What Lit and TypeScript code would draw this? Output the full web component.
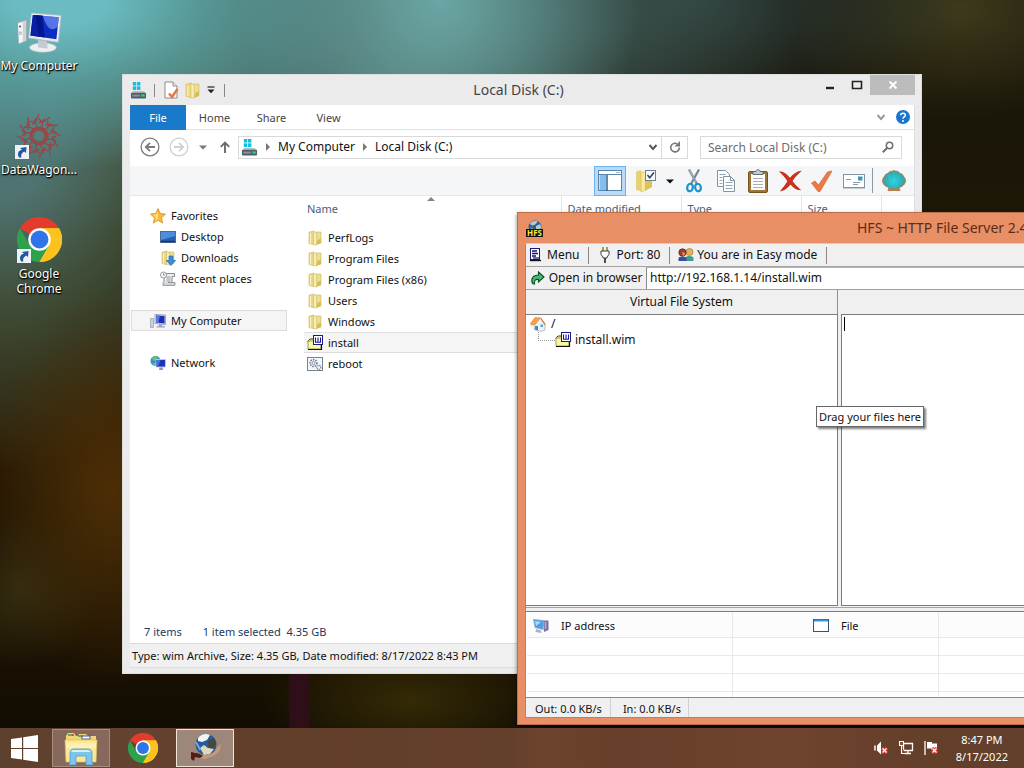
import { LitElement, html, css, svg, nothing } from "lit";
import { customElement } from "lit/decorators.js";
import { classMap } from "lit/directives/class-map.js";

/* ---------- icons ---------- */

const icon = (size: number, box: number, body: unknown) =>
  html`<svg width=${size} height=${size} viewBox="0 0 ${box} ${box}" aria-hidden="true">${body}</svg>`;

const folder = (size = 16) => icon(size, 16, svg`
  <path d="M2 2.2 7 1v13.6L2 13.6z" fill="#e9d784" stroke="#cdb458" stroke-width=".6"/>
  <path d="M8.5 2H14v11l-5.5 1z" fill="#ecdf95" stroke="#cbb55a" stroke-width=".6"/>
  <path d="M6.5 1.2 9.6 3v12L6.5 14.6z" fill="#f8efb6" stroke="#d0bb62" stroke-width=".6"/>
  <path d="M3.6 3v10.6" stroke="#fbf4c6" stroke-width="1"/><path d="M10.5 10 14 8.6V13l-4.4 2z" fill="#d6bd55"/>`);

const drive = (size = 18) => icon(size, 18, svg`
  <g fill="#12bfe4"><rect x="3" y="0" width="3.6" height="3.8"/><rect x="7.4" y="0" width="3.6" height="3.8"/>
  <rect x="3" y="4.6" width="3.6" height="3.8"/><rect x="7.4" y="4.6" width="3.6" height="3.8"/></g>
  <path d="M3.5 9.5h11l2.5 3H1z" fill="#b9c2c4"/><rect x="1" y="11.500" width="16" height="6" rx="1" fill="#4d6268"/>
  <rect x="2.4" y="13.400" width="8" height="2" fill="#8c8fa0"/><rect x="12" y="13.2" width="3.6" height="2.200" fill="#35d46a"/>`);

const props = () => icon(18, 18, svg`
  <path d="M3 1h8l4 4v12H3z" fill="#fff" stroke="#8b8b8b"/><path d="M11 1v4h4" fill="#eee" stroke="#8b8b8b"/>
  <path d="m7 12.5 3 3.5L15.500 8" fill="none" stroke="#e0764a" stroke-width="2.4"/>`);

const monitor = (size: number) => icon(size, 16, svg`
  <path d="M.5 5.500h3v9h-3z" fill="#cdd2da" stroke="#8790a0" stroke-width=".6"/>
  <path d="M5 1.500 15.500 2v9.500L5 10.500z" fill="#dfe3ec" stroke="#8289a0" stroke-width=".7"/>
  <path d="M6 2.600 14.600 3v7.400L6 9.600z" fill="#1c2fb4"/><path d="M6 2.600h4L8.500 9.700 6 9.600z" fill="#5b74e6"/>
  <path d="M9 11.200h3l.4 2H15v1.300H6.500v-1.300h2z" fill="#9aa5c0"/>`);

const computerLarge = () => icon(48, 48, svg`<g transform="translate(2 5) scale(.96)">
  <path d="m1 10 9-3v22l-8 3.500z" fill="#cfd3d7" stroke="#9aa1a8" stroke-width=".6"/>
  <path d="m1 11 5-1.500v20l-4 2z" fill="#f4f5f6"/><circle cx="3.200" cy="14" r="1" fill="#445"/>
  <path d="M2 20h3M2 22h3" stroke="#889" stroke-width=".8"/>
  <ellipse cx="27" cy="36" rx="14" ry="5" fill="#eceef0" stroke="#aab2ba" stroke-width=".6"/>
  <path d="m22 28 9 1 1 8-10-1z" fill="#c5cbd2"/>
  <path d="m15 0 31 2.500-3 28L12 26z" fill="#e8ebf0" stroke="#b3bac6" stroke-width=".7"/>
  <path d="m16.500 2 27 2.300-2.500 23L14 23.500z" fill="#0c2bc4"/>
  <path d="m16.500 2 11 .9L24 25l-10-1.500z" fill="#0a1fa8"/><path d="m19 2.200 7 .6L29 25.500l-6-.8z" fill="#021480" opacity=".8"/>
  <path d="M27 3 43.500 4.300l-1 10C36 20 31 16 27 3z" fill="#6d8df2" opacity=".75"/></g>`);

const petals = Array.from({ length: 12 }, (_, i) => i * 30);
const wagon = () => icon(48, 48, svg`<g fill="none" stroke="#a33f40" stroke-width="1.300" opacity=".9">
  ${petals.map((a) => svg`<g transform="rotate(${a} 24 24)"><path d="M24 17 20 11l4-9M24 11l6-4M20 11l-5-2"/><path d="M21 17.500 25 15l4 3"/></g>`)}
  <circle cx="24" cy="24" r="6"/></g>`);

const chrome = (size: number) => icon(size, 48, svg`
  <path d="M24 24 3.200 12A24 24 0 0 1 44.800 12z" fill="#e33b2e"/>
  <path d="M24 24V12h20.800A24 24 0 0 1 24 48z" fill="#fcc31e"/>
  <path d="M3.200 12A24 24 0 0 0 24 48l10.400-18L24 24 13.600 30z" fill="#2da14c"/>
  <path d="M24 12h20.800A24 24 0 0 1 24 48l10.400-18z" fill="#fcc31e"/>
  <circle cx="24" cy="24" r="12" fill="#fff"/><circle cx="24" cy="24" r="9.500" fill="#2f74e8"/>`);

const shortcut = () => icon(14, 14, svg`<rect width="14" height="14" fill="#eef2f6"/>
  <path d="M4 12.500C2 9 3 5.500 7 4.800L5 3l6.500-1-.5 6-1.800-1.500C6.500 8 5.500 10 6.500 12.500z" fill="#1f5a9c"/>`);

const star = () => icon(16, 16, svg`<path d="m8 .6 2.200 4.900 5.300.6-4 3.600 1.200 5.400L8 12.300l-4.700 2.800 1.200-5.400-4-3.600 5.300-.6z" fill="#f9b93c" stroke="#d98a1c" stroke-width=".8"/>
  <path d="M8 3v8l-3 2 1-4-3-2.300 3.500-.5z" fill="#fde08a"/>`);

const desktopIcon = () => icon(16, 16, svg`<rect x=".5" y="2.500" width="15" height="11" fill="#2560b4" stroke="#4f6a90"/>
  <path d="M1 3h14v4L1 11z" fill="#4b8fdc"/><path d="M1 12.500h14" stroke="#1c3354" stroke-width="1.400"/>`);

const downloads = () => html`<span class="stack">${folder()}<span class="over">${icon(16, 16, svg`<path d="M9 6h4v4.500h2.600L11 15.600 6.400 10.500H9z" fill="#3a8edb" stroke="#1d64ad" stroke-width=".6"/>`)}</span></span>`;

const recent = () => icon(16, 16, svg`
  <path d="M5 2.500h9.500v3H12v8H4V7" fill="#eceef0" stroke="#868c92"/><path d="M6.500 6h4M6.500 8h4M6.500 10h4" stroke="#8c9298" stroke-width=".9"/>
  <path d="M8 11.500h7v2.800H3v-2.800" fill="#d5d9dc" stroke="#868c92" stroke-width=".9"/>
  <circle cx="3.500" cy="4" r="3" fill="#f8f9fa" stroke="#888f96" stroke-width=".9"/><path d="M3.500 2.300V4H5" fill="none" stroke="#666" stroke-width=".7"/>`);

const network = () => icon(16, 16, svg`<circle cx="5.500" cy="6" r="5" fill="#2f8fc8"/>
  <path d="M2 3c2-2 4-2 6-1L6 5 3 6zM2 8l4 0 1 2.500-3 .3z" fill="#65c46a"/>
  <path d="M6 4.500h9.500V12H6z" fill="#1b36b8" stroke="#c6cee2" stroke-width=".9"/><path d="M6.600 5h4L8 11.400H6.600z" fill="#4a70e2"/>
  <path d="M9.500 12.500h3l.5 2.500h-4z" fill="#8796bc"/>`);

const wimFile = () => icon(16, 16, svg`<path d="M1 6 3 4h4v3H1z" fill="#fbf7a0" stroke="#26261c" stroke-width=".9"/>
  <path d="M1 6h13v8H1z" fill="#faf6a2" stroke="#8f8b42" stroke-width=".8"/><path d="M1 14.500h13.500V8" fill="none" stroke="#111" stroke-width="1.200"/>
  <rect x="6.500" y=".5" width="9" height="9" fill="#fff" stroke="#1a1a84"/><path d="M8.500 2.500v4.700h5V2.500M11 2.500v4.500" fill="none" stroke="#1a1a9c" stroke-width="1.100"/>`);

const batFile = () => icon(16, 16, svg`<rect x=".5" y="1.500" width="15" height="13" fill="#f3f7fb" stroke="#76828e"/>
  <circle cx="6.500" cy="7" r="3.400" fill="none" stroke="#6f7f90" stroke-width="1.600" stroke-dasharray="1.500 1"/><circle cx="6.500" cy="7" r="1.500" fill="none" stroke="#6f7f90" stroke-width=".8"/>
  <circle cx="11.800" cy="11.300" r="2" fill="none" stroke="#6f7f90" stroke-width="1.300" stroke-dasharray="1.100 .7"/>`);

const circleArrow = (flip: boolean, color: string) => icon(20, 20, svg`<circle cx="10" cy="10" r="8.900" fill="none" stroke=${color} stroke-width="1.300"/>
  <g transform=${flip ? "matrix(-1 0 0 1 20 0)" : "matrix(1 0 0 1 0 0)"}><path d="M15 10H6M10 5.800 5.800 10l4.200 4.200" fill="none" stroke=${color} stroke-width="1.800"/></g>`);

const caret = (color: string) => icon(8, 8, svg`<path d="M0 2.500h8L4 6.500z" fill=${color}/>`);
const crumb = () => icon(8, 8, svg`<path d="M2 0v8l4-4z" fill="#777"/>`);
const chevron = (color: string) => icon(10, 10, svg`<path d="m1.500 3 3.500 4 3.500-4" fill="none" stroke=${color} stroke-width="1.900"/>`);
const upArrow = () => icon(12, 12, svg`<path d="M6 12V1.500M1.800 5.800 6 1.500l4.200 4.300" fill="none" stroke="#6a6a6a" stroke-width="1.900"/>`);
const refresh = () => icon(12, 12, svg`<path d="M8 2.800A4.300 4.300 0 1 0 10.300 6.500" fill="none" stroke="#777" stroke-width="1.600"/><path d="M5.500 5.500H11V0z" fill="#777"/>`);
const lens = () => icon(12, 12, svg`<circle cx="7.500" cy="4.500" r="3.200" fill="none" stroke="#6f6f6f" stroke-width="1.500"/><path d="M5 7 .8 11.200" stroke="#6f6f6f" stroke-width="2"/>`);
const help = () => icon(14, 14, svg`<circle cx="7" cy="7" r="7" fill="#1a75cf"/><path d="M4.700 5.300C4.800 2.400 9.400 2.500 9.300 5.200 9.200 6.900 7 6.800 7 8.800" fill="none" stroke="#fff" stroke-width="1.500"/><circle cx="7" cy="10.900" r="1" fill="#fff"/>`);
const qatCaret = () => icon(8, 8, svg`<path d="M.5 1h7" stroke="#222" stroke-width="1.200"/><path d="M.5 3.500h7L4 7.200z" fill="#222"/>`);

const layoutIcon = () => icon(24, 24, svg`<rect x=".5" y="1.500" width="23" height="20" fill="#fff" stroke="#5a86ae"/><path d="M1 5.500h22" stroke="#5a86ae"/>
  <rect x="1.500" y="6" width="6.500" height="15" fill="#84bdee"/><path d="M9 6v16" stroke="#345f88" stroke-width="1.500"/><path d="M18 3.500h4" stroke="#9bb8d0"/>`);
const optionsIcon = () => icon(24, 24, svg`<path d="M2 2.500 7 1v21l-5-1z" fill="#e7d176"/><path d="M7 3h5v18l-5 2z" fill="#f6e99c" stroke="#d6be5c" stroke-width=".6"/>
  <path d="M11 12h7v6l-7 4z" fill="#ddc25a"/><rect x="11.500" y="1.500" width="10" height="10" fill="#f7fafc" stroke="#6c8294"/><path d="m13.500 6 2.200 2.800L20 3.500" fill="none" stroke="#32404c" stroke-width="1.500"/>`);
const scissors = () => icon(24, 24, svg`<path d="M7 .5 14.500 14M17 .5 9.500 14" stroke="#758593" stroke-width="2.200"/>
  <path d="M7.500 1 14 13" stroke="#c9d2da" stroke-width=".7"/><ellipse cx="8" cy="18.500" rx="2.800" ry="3.800" transform="rotate(15 8 18.500)" fill="none" stroke="#1d92cc" stroke-width="2.200"/><ellipse cx="16" cy="18.500" rx="2.800" ry="3.800" transform="rotate(-15 16 18.500)" fill="none" stroke="#1d92cc" stroke-width="2.200"/>`);
const copyIcon = () => icon(24, 24, svg`<g stroke="#8493a2" fill="#fff"><path d="M3.500 1.500h8l4 4v12h-12z"/><path d="M9.500 7.500h7l4 4v11h-11z"/><path d="M16.500 7.500v4h4" fill="none"/></g>
  <path d="M5.500 5.500h6M5.500 8.500h3M5.500 11.500h3M5.500 14.500h3M11.500 13.500h7M11.500 16.500h7M11.500 19.500h7" stroke="#93a3b2"/>`);
const pasteIcon = () => icon(24, 24, svg`<rect x="2.500" y="2.500" width="19" height="21" rx="1.500" fill="#9c7536" stroke="#745523"/><rect x="5" y="5" width="14" height="16" fill="#fdfdfb"/>
  <path d="M7 9.500h10M7 12.500h10M7 15.500h10M7 18.500h10" stroke="#a9afb4"/><path d="M7 2.500h3C10 0 14 0 14 2.500h3v3H7z" fill="#c5cbd0" stroke="#59626a" stroke-width=".9"/>`);
const deleteIcon = () => icon(24, 24, svg`<path d="M2.500 3C6 3 9.500 6.500 12 9.600 14.500 6.500 18 3 22 2.500 18.500 5.500 15.500 9 13.800 12c2.200 3 4.700 6 7.700 8.500-3-.3-6.500-3-9-6C10 17.500 7.500 20.500 3.500 21.500 6 18.500 8.500 15 10.200 12 8 9 5.500 5.500 2.500 3z" fill="#d3331e" stroke="#c22e1a" stroke-width="1.200"/>`);
const checkIcon = () => icon(24, 24, svg`<path d="m1.500 14 3.500-2 3.500 4L17.500 3l4.500-1L10 22.500H8z" fill="#ec7a45" stroke="#d4653a" stroke-width=".7"/>`);
const mailIcon = () => icon(24, 24, svg`<rect x="1.500" y="5.500" width="21" height="13" fill="#fff" stroke="#8592a0"/><path d="M1 19.500h22" stroke="#c5ccd2"/><rect x="16" y="7.500" width="4.500" height="4" fill="#3a97b8"/><path d="M4 10.500h5M11 13.500h7M11 15.500h5" stroke="#8c99a6"/>`);
const shellIcon = () => icon(24, 24, svg`<defs><radialGradient id="sh" cx=".5" cy=".5" r=".6"><stop offset="0" stop-color="#25d6ea"/><stop offset=".65" stop-color="#2fa9ae"/><stop offset="1" stop-color="#a98457"/></radialGradient></defs>
  <path d="M6 21.500 7 18.500C2.500 17.500 0 14 .6 10.800 1 8.500 2.800 7.500 3.500 5.500 5 4.500 6.500 4.500 7.500 2.800 9 1.800 10.500 2.500 12 1.500c1.500 1 3 .3 4.500 1.300 1 1.700 2.500 1.700 4 2.700.7 2 2.500 3 2.900 5.300.6 3.200-1.900 6.700-6.400 7.700l1 3z" fill="url(#sh)" stroke="#b8794c" stroke-width=".9"/>
  <path d="M12 19V3M10.500 19 6 5M13.500 19 18 5M9 18.500 2.500 10M15 18.500 21.500 10" stroke="#58e3ee" stroke-width=".5" opacity=".5"/><path d="M7 20.500h10" stroke="#c9773f" stroke-width="1.800"/>`);

const globeShapes = svg`<circle cx="9" cy="7" r="6.500" fill="#2c5f9e"/><path d="M4 3.500C6 1 9 .8 11.500 1.200L10 4 7 5.500 5 5zM10 6l4-2 1.300 3L13 11l-3-1z" fill="#b9c8c0"/><path d="M4 7l3 1 1 3-2 1.500z" fill="#6aa05a"/>`;
const hfsIcon = () => html`<span class="stack">${icon(17, 17, svg`${globeShapes}<rect x="0" y="9" width="17" height="8" fill="#111"/>`)}<span class="over hfstag">HFS</span></span>`;
const hfsLarge = () => icon(32, 32, svg`<circle cx="17" cy="12.500" r="10.500" fill="#275a9a"/>
  <path d="M9 6c3-4 8-5 12-3l-3 5-5 2-4-1z" fill="#f1f4f2"/><path d="m19 9 6-3 2.500 5-3 6-5-2z" fill="#47483a"/><path d="m11 16 4-3 4 3 6 1-4 5-6 1z" fill="#dfd8b8"/>
  <path d="M7 10c1 3 3 4 4 8" stroke="#6ba9dc" stroke-width="2" fill="none"/>
  <path d="M4 20c5 3 7 2 10 3 5 1 11-1 14-7l4-4c0 7-4 10-8 12l-8 3-5-1-3-5z" fill="#c9987a"/><path d="M2 20c4 1 9 1 12 4l-3 2-5-1-1 4-3-2z" fill="#4e1f17"/>`);
const explorerLarge = () => icon(34, 34, svg`<path d="M2 5 4 2h6l2 3h2l1-2h7l2 2h8v26H2z" fill="#f2d375"/>
  <path d="M4 4h5M14 5h5" stroke="#36a04c" stroke-width="1.500"/><path d="M8 4h2" stroke="#d33" stroke-width="1.500"/><rect x="18" y="5" width="8" height="3" fill="#fff" stroke="#558"/>
  <path d="M1 9h32l-1 22H2z" fill="#fbe795" stroke="#e0c060" stroke-width=".7"/><path d="M2 12h30v5H2z" fill="#fff3bc" opacity=".8"/>
  <path d="M6 31V22c0-3 2-4 4-4h14c2 0 4 1 4 4v9l1 3h-7v-9H12v9H5z" fill="#7cc5ec" stroke="#4b9fd0" stroke-width=".8"/><path d="M7 21c1-2 2-2 4-2h12c2 0 3 1 4 2z" fill="#d6f0fb"/>`);

const menuIcon = () => icon(16, 16, svg`<rect x="2.500" y="1.500" width="9" height="11" fill="#fff" stroke="#1b1b78"/><path d="M4 4h5M4 6.500h6M4 9h4" stroke="#11116a" stroke-width="1.300"/><path d="M2 13.500h11" fill="none" stroke="#111" stroke-width="1.400"/><path d="M5 11h6" stroke="#1b1b78" stroke-width="1.300"/>`);
const plugIcon = () => icon(16, 16, svg`<path d="M6 0v4M10 0v4" stroke="#8b8a30" stroke-width="1.600"/><path d="M4 4h8v3.500L10 10v1H6v-1L4 7.500z" fill="#fff" stroke="#3c3c3c"/><path d="M8 11v5" stroke="#3c3c3c" stroke-width="1.800"/>`);
const usersIcon = () => icon(16, 16, svg`<circle cx="11.500" cy="5" r="3.500" fill="#e6b35c" stroke="#a8752c" stroke-width=".7"/><path d="M7.500 14V10.500c1-2 6-2 8 0V14z" fill="#3f9c94"/>
  <circle cx="4.500" cy="5.500" r="3.700" fill="#a63a2c" stroke="#5e1d17" stroke-width=".7"/><path d="M4 5c1.500 0 3 .5 3.500 2L5 9.500z" fill="#d98a5c"/><path d="M.5 14v-3c1-2 7-2 8 0v3z" fill="#384f9c"/>`);
const openIcon = () => icon(16, 16, svg`<path d="M2.500 13.500C.5 9 3 5 8.500 5V2L14 7 8.500 12V9.500C5.500 9 4 10.500 4.500 14z" fill="#3fbe6e" stroke="#0f4a26" stroke-width="1.100"/>`);
const homeIcon = () => icon(16, 16, svg`<path d="M10.500 2 15 8v6l-4 1.500-7-2V8z" fill="#eef2f8" stroke="#8e9db4" stroke-width=".6"/><path d="M0 7.500 5 1l6 .5L5.500 9 1 9.500z" fill="#f0a04c"/><path d="m11 1.500 4.800 7-1.200.5L10.500 3z" fill="#e0782c"/><path d="M5 10h3v4.500l-3-1z" fill="#3f86cc"/><rect x="10.500" y="8.500" width="2.500" height="2.500" fill="#55a2dc"/>`);
const ipIcon = () => icon(16, 16, svg`<path d="M10 2.500h5.500V12L11 14z" fill="#7b72a8"/><path d="M12.500 4v7" stroke="#b3acd2" stroke-width="1.500"/><path d="m.5 1.500 10 1-.5 9L2 9.500z" fill="#4d9fe0" stroke="#8fa6d0" stroke-width=".8"/><path d="m2 3 6 1-5 4z" fill="#a9dcf8"/><path d="m3 11 5 1.500.5 2.500-6-1z" fill="#a7b0cc"/>`);
const fileIcon = () => icon(16, 16, svg`<rect x=".5" y="1.500" width="15" height="12" fill="#fff" stroke="#3c4e7c"/><path d="M1 2.500h14" stroke="#2f9bd4" stroke-width="2"/>`);

const startIcon = () => icon(27, 27, svg`<g fill="#fff"><path d="M0 4 11 2.500V13H0zM12.200 2.300 27 0v13H12.200zM0 14h11v10.500L0 23zM12.200 14H27v13l-14.800-2.300z"/></g>`);
const cross = svg`<path d="m9 8 5 5M14 8l-5 5" stroke="#e23c34" stroke-width="3.200"/><path d="m9.500 8.500 4 4M13.500 8.500l-4 4" stroke="#fff" stroke-width="1.100"/>`;
const volume = () => icon(16, 16, svg`<path d="M2 5.500v5" stroke="#fff" stroke-width="1.500"/><path d="M4 5.500 8 1.500v13l-4-4z" fill="#fff"/>${cross}`);
const netTray = () => icon(16, 16, svg`<path d="M5.500 3.500h9v7h-9zM10 10.500v3M7 13.500h6" fill="none" stroke="#fff" stroke-width="1.300"/><path d="M1.500 1.500h4v4h-4zM3.500 5.500v8H7" fill="#7a4c3a" stroke="#fff" stroke-width="1.100"/>`);
const flag = () => icon(16, 16, svg`<path d="M2 1v14" stroke="#fff" stroke-width="1.300"/><path d="M4 2h5v1.500h5V10H8V8.500H4z" fill="#fff"/>${cross}`);

const shared = css`
  :host { display: block; box-sizing: border-box; font-family: "Noto Sans", "Open Sans", sans-serif; font-size: 12px; line-height: 16px; color: #111; }
  *, *::before, *::after { box-sizing: border-box; }
  svg { display: block; flex: none; }
  button, input { font: inherit; color: inherit; background: none; border: 0; padding: 0; margin: 0; }
  button { display: flex; align-items: center; justify-content: center; }
  a { color: inherit; text-decoration: none; }
  ul { list-style: none; margin: 0; padding: 0; }
  .stack { position: relative; display: block; flex: none; }
  .over { position: absolute; left: 0; bottom: 0; }
`;

/* ---------- file explorer ---------- */

@customElement("explorer-window")
class ExplorerWindow extends LitElement {
  static styles = [shared, css`
    :host { display: flex; flex-direction: column; background: #ebebeb; border: 1px solid #dcdfdf; padding: 0 6px 5px 7px; }
    .title { display: grid; grid-template-columns: 1fr auto 1fr; height: 30px; align-items: center; }
    .quick { display: flex; align-items: center; gap: 4px; }
    .quick .bar { width: 1px; height: 13px; background: #888; margin: 0 3px; }
    .quick .more { padding: 0 2px; }
    h1 { margin: 0 8px 0 0; font-size: 14px; font-weight: 400; line-height: 20px; color: #444; }
    .ctl { display: flex; justify-content: flex-end; align-self: start; }
    .ctl button { width: 27px; height: 20px; }
    .ctl .close { width: 45px; background: #bcbcbc; }
    .frame { flex: 1; min-height: 0; display: flex; flex-direction: column; background: #fff; border: 1px solid #dedede; border-width: 0 1px 1px 0; }
    .tabs { display: flex; height: 25px; border-bottom: 1px solid #e2e3e4; color: #444; align-items: stretch; font-size: 11px; }
    .tabs .file { width: 56px; background: #1979ca; color: #fff; margin-bottom: -1px; }
    .tabs .tab { width: 57px; padding-top: 1px; }
    .tabs .end { margin-left: auto; display: flex; align-items: center; gap: 10px; padding-right: 4px; }
    .nav { display: flex; align-items: center; height: 36px; padding: 0 12px 2px 10px; }
    .nav > .fwd { margin-left: 9px; }
    .nav > .hist { margin: 0 12px 0 10px; }
    .addr { flex: 1; display: flex; align-items: center; height: 23px; border: 1px solid #d9d9d9; margin-left: 7px; margin-right: 12px; padding-left: 2px; gap: 6px; }
    .addr .last { flex: 1; }
    .addr .go { width: 26px; height: 21px; border-left: 1px solid #d9d9d9; margin-left: -3px; }
    .search { width: 202px; display: flex; align-items: center; height: 23px; border: 1px solid #d9d9d9; padding: 0 7px; }
    .search input { flex: 1; min-width: 0; height: 21px; outline: 0; }
    .search input::placeholder { color: #6d6d6d; opacity: 1; }
    .tools { display: flex; justify-content: flex-end; align-items: center; gap: 8px; height: 30px; background: #f5f6f7; border-bottom: 1px solid #e6e7e8; padding-right: 8px; }
    .tools .on { width: 32px; height: 30px; background: #b9dbf8; border: 1px solid #6cb0ee; }
    .tools .opt { gap: 8px; }
    .tools .bar { width: 1px; height: 25px; background: #8b98a5; margin: 0 1px 0 -2px; }
    .body { flex: 1; display: flex; min-height: 0; }
    nav { width: 174px; padding: 9px 17px 0 1px; font-size: 11px; }
    nav a { display: flex; align-items: center; gap: 5px; height: 21px; padding-left: 18px; border: 1px solid transparent; }
    nav a.child { padding-left: 28px; }
    nav a.gap { margin-top: 21px; }
    nav a.sel { background: #f5f5f5; border-color: #dcdcdc; }
    .list { flex: 1; min-width: 0; position: relative; }
    .sort { position: absolute; left: 123px; top: 0; }
    table { border-collapse: collapse; table-layout: fixed; width: 577px; font-size: 11px; }
    .n { width: 257px; } .d { width: 120px; } .z { width: 80px; }
    th { text-align: left; font-weight: 400; color: #4c607a; height: 25px; padding: 1px 0 0 6px; border-right: 1px solid #e5e5e5; font-size: 11px; }
    th:first-child { padding-left: 3px; }
    tr.sp td { height: 6px; padding: 0; }
    td { height: 21px; padding: 0 3px; }
    td .name { display: flex; gap: 5px; align-items: center; }
    tr.sel td { background: #f5f5f5; box-shadow: inset 0 1px #dedede, inset 0 -1px #dedede; }
    .items { display: flex; gap: 21px; height: 23px; align-items: center; padding-left: 14px; color: #1e395b; font-size: 11px; }
    .items span + span { white-space: pre; }
    .status { height: 24px; display: flex; align-items: center; background: #f0f0f0; border-top: 1px solid #dadada; padding-left: 2px; font-size: 11px; }
  `];

  private places = [
    { t: "Favorites", i: star(), c: {} },
    { t: "Desktop", i: desktopIcon(), c: { child: true } },
    { t: "Downloads", i: downloads(), c: { child: true } },
    { t: "Recent places", i: recent(), c: { child: true } },
    { t: "My Computer", i: monitor(16), c: { gap: true, sel: true } },
    { t: "Network", i: network(), c: { gap: true } },
  ];
  private files = [
    ...["PerfLogs", "Program Files", "Program Files (x86)", "Users", "Windows"].map((t) => ({ t, i: folder(), sel: false })),
    { t: "install", i: wimFile(), sel: true },
    { t: "reboot", i: batFile(), sel: false },
  ];

  render() {
    return html`
      <header class="title">
        <div class="quick">${drive(17)}<span class="bar"></span>
          <button aria-label="Properties">${props()}</button><button aria-label="New folder">${folder(17)}</button>
          <button class="more" aria-label="Customize toolbar">${qatCaret()}</button><span class="bar"></span></div>
        <h1>Local Disk (C:)</h1>
        <div class="ctl">
          <button aria-label="Minimize">${icon(12, 12, svg`<path d="M2 9h8" stroke="#222" stroke-width="2.400"/>`)}</button>
          <button aria-label="Maximize">${icon(12, 12, svg`<path d="M1.500 2.500h9v7h-9zM1 2.500h10" fill="none" stroke="#222" stroke-width="1.600"/>`)}</button>
          <button class="close" aria-label="Close">${icon(10, 10, svg`<path d="m1.500 1.500 7 7M8.500 1.500l-7 7" stroke="#fff" stroke-width="1.900"/>`)}</button>
        </div>
      </header>
      <div class="frame">
        <div class="tabs">
          <button class="file">File</button>
          ${["Home", "Share", "View"].map((t) => html`<button class="tab">${t}</button>`)}
          <div class="end"><button aria-label="Expand ribbon">${chevron("#999")}</button><button aria-label="Help">${help()}</button></div>
        </div>
        <div class="nav">
          <button aria-label="Back">${circleArrow(false, "#7a7a7a")}</button>
          <button class="fwd" aria-label="Forward">${circleArrow(true, "#d0d0d0")}</button>
          <button class="hist" aria-label="Recent locations">${caret("#777")}</button>
          <button aria-label="Up">${upArrow()}</button>
          <div class="addr">${drive(17)}${crumb()}<a href="#">My Computer</a>${crumb()}<a class="last" href="#">Local Disk (C:)</a>
            <button aria-label="Previous locations">${chevron("#555")}</button><button class="go" aria-label="Refresh">${refresh()}</button></div>
          <label class="search"><input type="search" aria-label="Search Local Disk (C:)" placeholder="Search Local Disk (C:)">${lens()}</label>
        </div>
        <div class="tools">
          <button class="on" aria-label="Navigation pane">${layoutIcon()}</button>
          <button class="opt" aria-label="Folder options">${optionsIcon()}${caret("#111")}</button>
          <button aria-label="Cut">${scissors()}</button><button aria-label="Copy">${copyIcon()}</button>
          <button aria-label="Paste">${pasteIcon()}</button><button aria-label="Delete">${deleteIcon()}</button>
          <button aria-label="Rename">${checkIcon()}</button><button aria-label="Send">${mailIcon()}</button>
          <span class="bar"></span><button aria-label="Shell">${shellIcon()}</button>
        </div>
        <div class="body">
          <nav>${this.places.map((p) => html`<a href="#" class=${classMap(p.c)}>${p.i}${p.t}</a>`)}</nav>
          <div class="list">
            <span class="sort">${icon(8, 8, svg`<path d="M0 5h8L4 1z" fill="#7b8794"/>`)}</span>
            <table>
              <colgroup><col class="n"><col class="d"><col class="d"><col class="z"></colgroup>
              <thead><tr><th>Name</th><th>Date modified</th><th>Type</th><th>Size</th></tr></thead>
              <tbody><tr class="sp"><td colspan="4"></td></tr>
                ${this.files.map((f) => html`<tr class=${f.sel ? "sel" : nothing}><td><span class="name">${f.i}${f.t}</span></td><td></td><td></td><td></td></tr>`)}
              </tbody>
            </table>
          </div>
        </div>
        <div class="items"><span>7 items</span><span>1 item selected  4.35 GB</span></div>
        <div class="status">Type: wim Archive, Size: 4.35 GB, Date modified: 8/17/2022 8:43 PM</div>
      </div>`;
  }
}

/* ---------- HTTP file server ---------- */

@customElement("hfs-window")
class HfsWindow extends LitElement {
  static styles = [shared, css`
    :host { display: flex; flex-direction: column; background: #e88f66; border: 1px solid #bd6f4a; padding: 0 7px 6px; }
    .title { display: flex; align-items: center; height: 30px; padding-left: 1px; gap: 314px; }
    .hfstag { right: 0; font-size: 8px; line-height: 8px; font-weight: 700; color: #f6e84c; text-align: center; }
    h1 { margin: 0; font-size: 14px; font-weight: 400; line-height: 20px; color: #5c2c17; white-space: nowrap; }
    .frame { flex: 1; min-height: 0; display: flex; flex-direction: column; background: #f0f0f0; border: 1px solid #8d8d8d; border-top-color: #d9c9c0; }
    .menu { display: flex; align-items: center; height: 23px; border-bottom: 1px solid #a5a5a5; padding-left: 2px; }
    .menu button { gap: 3px; }
    .menu .bar { width: 1px; height: 17px; background: #888; margin: 0 8px 0 9px; }
    .open { display: flex; height: 23px; border-bottom: 1px solid #a0a0a0; }
    .open button { width: 120px; gap: 3px; }
    .open input { flex: 1; height: 22px; background: #fff; border-left: 1px solid #8a8a8a; border-top: 1px solid #b5b5b5; padding: 0 0 2px 3px; outline: 0; }
    .panes { flex: 1; min-height: 0; display: grid; grid-template-columns: 312px 1fr; column-gap: 3px; }
    .pane { display: flex; flex-direction: column; min-width: 0; }
    h2 { margin: 0; height: 24px; font-size: 12px; line-height: 24px; font-weight: 400; text-align: center; border-right: 1px solid #909090; }
    .pane + .pane h2 { border-right: 0; }
    .well { flex: 1; background: #fff; border: 1px solid #7d7d7d; border-left-width: 0; padding: 1px 4px; }
    .pane + .pane .well { border-left-width: 1px; padding: 2px; }
    .well li { display: flex; align-items: center; gap: 5px; height: 16px; }
    .well li.kid { padding-left: 8px; gap: 0; }
    .kid::before { content: ""; width: 17px; height: 9px; border: dotted #999; border-width: 0 0 1px 1px; align-self: flex-start; }
    .kid span { padding-left: 4px; }
    .cursor { width: 1px; height: 14px; background: #000; }
    .table { margin-top: 5px; border-top: 1px solid #7d7d7d; height: 87px; background: #fff; border-bottom: 1px solid #8a8a8a; overflow: hidden; padding-left: 1px; box-shadow: 0 -3px #f0f0f0, 0 -4px #a5a5a5; }
    table { border-collapse: collapse; table-layout: fixed; width: 618px; font-size: 11px; }
    th, td { border: solid #e9e9e9; border-width: 0 1px 1px 0; padding: 0; height: 18px; font-weight: 400; }
    th { height: 25px; background: #fcfcfc; padding-top: 3px; }
    th span { display: flex; align-items: center; justify-content: center; gap: 12px; }
    th:first-child span { justify-content: flex-start; padding-left: 6px; }
    .status { display: flex; height: 19px; font-size: 11px; align-items: center; }
    .status span { padding: 1px 8px 0 9px; height: 19px; line-height: 19px; border-right: 1px solid #d0d0d0; }
    .status span + span { padding: 1px 7px 0 12px; }
  `];

  render() {
    return html`
      <header class="title">${hfsIcon()}<h1>HFS ~ HTTP File Server 2.4</h1></header>
      <div class="frame">
        <div class="menu">
          <button>${menuIcon()}Menu</button><span class="bar"></span>
          <button>${plugIcon()}Port: 80</button><span class="bar"></span>
          <button>${usersIcon()}You are in Easy mode</button><span class="bar"></span>
        </div>
        <div class="open"><button>${openIcon()}Open in browser</button>
          <input aria-label="Server address" .value=${"http://192.168.1.14/install.wim"}></div>
        <div class="panes">
          <section class="pane"><h2>Virtual File System</h2>
            <ul class="well"><li>${homeIcon()}<span>/</span></li><li class="kid">${wimFile()}<span>install.wim</span></li></ul></section>
          <section class="pane"><h2></h2><div class="well"><div class="cursor"></div></div></section>
        </div>
        <div class="table"><table>
          <thead><tr><th><span>${ipIcon()}IP address</span></th><th><span>${fileIcon()}File</span></th><th></th></tr></thead>
          <tbody>${[0, 1, 2, 3].map(() => html`<tr><td></td><td></td><td></td></tr>`)}</tbody>
        </table></div>
        <div class="status"><span>Out: 0.0 KB/s</span><span>In: 0.0 KB/s</span></div>
      </div>`;
  }
}

/* ---------- desktop ---------- */

@customElement("app-root")
class AppRoot extends LitElement {
  static styles = [shared, css`
    :host { height: 100vh; display: flex; flex-direction: column; overflow: hidden; background: #141004; }
    .desk { position: relative; flex: 1; min-height: 0; overflow: hidden;
      background:
        linear-gradient(90deg, transparent 288px, #2e0f18 291px 308px, transparent 311px) 0 100% / 100% 54px no-repeat,
        radial-gradient(ellipse 150px 70px at 410px 700px, #342a06, transparent),
        radial-gradient(ellipse 120px 200px at 110px 490px, #4c2e06, transparent),
        radial-gradient(ellipse 80px 80px at 20px 590px, #332c10, transparent),
        radial-gradient(ellipse 300px 170px at 60px 0, #6abcc2 15%, rgba(88, 160, 160, .8) 50%, transparent),
        radial-gradient(ellipse 200px 200px at 440px 0, #6aa6a4, transparent),
        radial-gradient(ellipse 280px 340px at 0 130px, #4f7370 20%, rgba(70, 88, 66, .85) 50%, transparent),
        radial-gradient(ellipse 600px 200px at 200px 30px, #4a6c68 40%, transparent),
        radial-gradient(ellipse 260px 120px at 700px 0, #2c3b38, transparent),
        radial-gradient(ellipse 180px 110px at 960px 10px, #3e3a1c, transparent),
        linear-gradient(180deg, #17150a, #1e1706 35%, #2c1c04 60%, #120d02);
    }
    .icons { display: grid; grid-auto-rows: 104px; width: 78px; padding-top: 8px; }
    .icons a { display: flex; flex-direction: column; align-items: center; gap: 3px; color: #fff; line-height: 15px; text-align: center; text-shadow: 0 1px 2px #000, 1px 1px 1px #000; }
    .pic { position: relative; height: 47px; display: flex; align-items: center; }
    .pic .arrow { position: absolute; left: 0; bottom: 0; }
    explorer-window, hfs-window { position: absolute; }
    explorer-window { left: 122px; top: 74px; width: 800px; height: 600px; }
    hfs-window { left: 517px; top: 212px; width: 830px; height: 513px; box-shadow: 0 2px 4px rgba(0, 0, 0, .5); }
    .tip { position: absolute; left: 816px; top: 406px; padding: 0 2px; background: #fff; border: 1px solid #666; box-shadow: 2px 2px 2px rgba(0, 0, 0, .5); font-size: 11px; line-height: 19px; }
    .task { display: flex; align-items: center; height: 40px; padding-right: 16px;
      background: linear-gradient(90deg, #5c3f2c, #644330 12%, #613e2a 25%, #64402c 50%, #6c442e 53%, #673f2a 60%, #70432e 77%, #643f2a 90%, #62402c); }
    .task button { width: 58px; height: 38px; margin-right: 4px; border: 1px solid transparent; }
    .task .start { width: 48px; }
    .task .run { background: #86695a; border-color: #a58d80; }
    .task .active { background: #9d877a; border-color: #f0e4d8; }
    .tray { margin-left: auto; display: flex; gap: 9px; }
    .clock { margin-left: 17px; text-align: center; color: #fff; font-size: 11px; line-height: 17px; }
  `];

  private shortcuts = [
    { t: "My Computer", i: computerLarge(), link: false },
    { t: "DataWagon...", i: wagon(), link: true },
    { t: "Google Chrome", i: chrome(45), link: true },
  ];

  render() {
    return html`
      <main class="desk">
        <div class="icons">${this.shortcuts.map((s) => html`<a href="#"><span class="pic">${s.i}${s.link ? html`<span class="arrow">${shortcut()}</span>` : nothing}</span>${s.t}</a>`)}</div>
        <explorer-window></explorer-window>
        <hfs-window></hfs-window>
        <div class="tip" role="tooltip">Drag your files here</div>
      </main>
      <footer class="task">
        <button class="start" aria-label="Start">${startIcon()}</button>
        <button class="run" aria-label="File Explorer">${explorerLarge()}</button>
        <button aria-label="Google Chrome">${chrome(30)}</button>
        <button class="active" aria-label="HFS">${hfsLarge()}</button>
        <div class="tray">${volume()}${netTray()}${flag()}</div>
        <div class="clock"><div>8:47 PM</div><div>8/17/2022</div></div>
      </footer>`;
  }
}
